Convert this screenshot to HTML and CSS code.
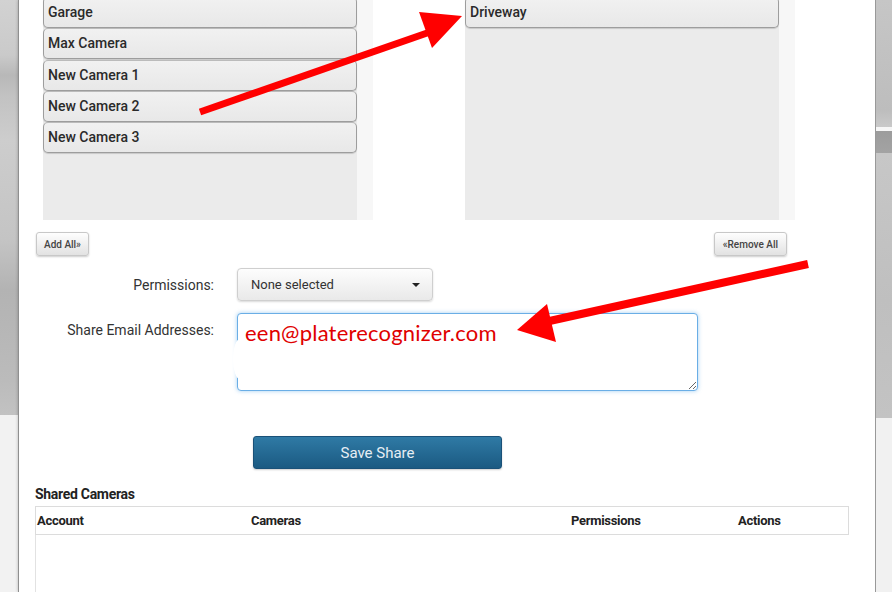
FILE: index.html
```html
<!doctype html>
<html>
<head>
<meta charset="utf-8">
<title>Share Cameras</title>
<link rel="stylesheet" href="styles.css">
</head>
<body>
<div class="page">
	<div class="side side-left"></div>
	<div class="modal">
		<div class="lists">
			<div class="listbox">
				<ul class="list">
					<li>Garage</li>
					<li>Max Camera</li>
					<li>New Camera 1</li>
					<li>New Camera 2</li>
					<li>New Camera 3</li>
				</ul>
			</div>
			<div class="listbox">
				<ul class="list">
					<li>Driveway</li>
				</ul>
			</div>
		</div>
		<div class="list-btns">
			<button class="btn-sm">Add All&raquo;</button>
			<button class="btn-sm">&laquo;Remove All</button>
		</div>
		<div class="form-row row-perm">
			<label class="form-label">Permissions:</label>
			<div class="select">None selected<span class="caret"></span></div>
		</div>
		<div class="form-row row-email">
			<label class="form-label">Share Email Addresses:</label>
			<div class="email-wrap">
				<textarea class="email">een@platerecognizer.com</textarea>
				<span class="blob"></span>
			</div>
		</div>
		<div class="save-row">
			<button class="btn-save">Save Share</button>
		</div>
		<h4 class="section-title">Shared Cameras</h4>
		<div class="shares">
			<div class="shares-head">
				<span>Account</span>
				<span>Cameras</span>
				<span>Permissions</span>
				<span>Actions</span>
			</div>
			<div class="shares-body"></div>
		</div>
	</div>
	<div class="side side-right"></div>

	<!-- annotation arrows -->
	<svg class="arrows" width="892" height="592" viewBox="0 0 892 592">
		<line x1="200" y1="112" x2="430" y2="32" stroke="#f00" stroke-width="7"/>
		<polygon points="462,16 419,12 432,48" fill="#f00"/>
		<line x1="808" y1="264" x2="545" y2="322" stroke="#f00" stroke-width="8"/>
		<polygon points="517,330 547,304 556,342" fill="#f00"/>
	</svg>
</div>
</body>
</html>
```

FILE: styles.css
```css
*{margin:0; padding:0; list-style:none; box-sizing:border-box;}
body{background:#f0f0f0; font-family:Roboto, "Liberation Sans", Arial, sans-serif; color:#333; overflow:hidden;}
.page{position:relative; width:892px; height:592px; display:flex; overflow:hidden;}

.side{flex:none; height:100%;}
.side-left{width:18px; background:linear-gradient(to bottom, #d2d2d2 0, #cacaca 55px, #b8b8b8 75px, #c2c2c2 95px, #cdcdcd 140px, #c4c4c4 240px, #b3b3b3 290px, #bbbbbb 380px, #c2c2c2 415px, #f2f2f2 415px);}
.side-right{width:16px; background:linear-gradient(to bottom, #c6c6c6 0, #bdbdbd 110px, #c9c9c9 127px, #f6f6f6 127px, #f6f6f6 131px, #9c9c9c 131px, #a3a3a3 153px, #c7c7c7 153px, #bfbfbf 300px, #c3c3c3 418px, #f1f1f1 418px);}

.modal{flex:none; width:858px; height:100%; background:#fff; padding:0 26px 0 16px; border-left:1px solid #8f8f8f; border-right:1px solid #999; box-shadow:0 0 3px rgba(0,0,0,0.25);}

/* dual list */
.lists{display:flex; gap:92px; margin:-3px 0 0 8px; height:223px;}
.listbox{width:330px; height:100%; background:#f7f7f7;}
.list{width:314px; height:100%; background:#ebebeb; display:flex; flex-direction:column; gap:0.33px;}
.list li{flex:none; height:31px; padding:0 4px; line-height:29px; font-size:14px; font-weight:500; color:#2a2a2a; border:1px solid #9d9d9d; border-top-color:#bbb; border-radius:5px; background:linear-gradient(to bottom, #f1f1f1, #e8e8e8); box-shadow:0 1px 1px rgba(0,0,0,0.15);}

.list-btns{display:flex; justify-content:space-between; margin-top:12px; padding:0 62px 0 1px;}
.btn-sm{height:24px; padding:0 7px; font-family:Roboto, "Liberation Sans", sans-serif; font-size:10px; font-weight:500; color:#444; border:1px solid #c8c8c8; border-radius:3px; background:linear-gradient(to bottom, #fefefe, #e2e2e2); box-shadow:0 1px 2px rgba(0,0,0,0.2);}
.btn-sm + .btn-sm{padding:0 8px;}

/* form */
.form-row{display:flex; gap:23px; margin-top:12px;}
.row-perm{align-items:center;}
.form-label{width:179px; text-align:right; font-size:14px; line-height:18px; color:#333;}
.row-email .form-label{padding-top:8px;}
.select{position:relative; width:196px; height:33px; padding-left:13px; line-height:31px; font-size:13px; color:#333; border:1px solid #cfcfcf; border-radius:4px; background:linear-gradient(to bottom, #fdfdfd, #e9e9e9); box-shadow:0 1px 2px rgba(0,0,0,0.15);}
.caret{position:absolute; right:12px; top:14px; width:0; height:0; border-left:4px solid transparent; border-right:4px solid transparent; border-top:4px solid #222;}
.email-wrap{position:relative; width:461px; height:78px;}
.email{display:block; width:100%; height:100%; padding:5px 7px; font-family:Lato, "Open Sans", sans-serif; font-size:22px; letter-spacing:0.2px; color:#e00000; border:1px solid #6aaee6; border-radius:4px; box-shadow:0 0 4px rgba(102,175,233,0.6); outline:none; resize:vertical; overflow:hidden;}
.blob{position:absolute; left:-4px; top:26px; width:14px; height:40px; border-radius:50%; background:#fff;}

.save-row{margin-top:45px; padding-left:218px;}
.btn-save{width:249px; height:33px; font-family:Roboto, "Liberation Sans", sans-serif; font-size:15px; color:#e6eef4; border:1px solid #1a5178; border-radius:3px; background:linear-gradient(to bottom, #2f7aa5, #1b5a82); box-shadow:0 1px 2px rgba(0,0,0,0.2);}

/* shared table */
.section-title{margin:15px 0 2px; font-size:14px; line-height:20px; font-weight:bold; color:#222; letter-spacing:-0.3px;}
.shares-head{display:grid; grid-template-columns:214px 320px 167px 1fr; height:29px; border:1px solid #dcdcdc; align-items:center;}
.shares-head span{padding-left:1px; font-size:13px; font-weight:bold; color:#222; letter-spacing:-0.3px;}
.shares-body{height:80px; border-left:1px solid #e2e2e2;}

.arrows{position:absolute; top:0; left:0; pointer-events:none;}
```
